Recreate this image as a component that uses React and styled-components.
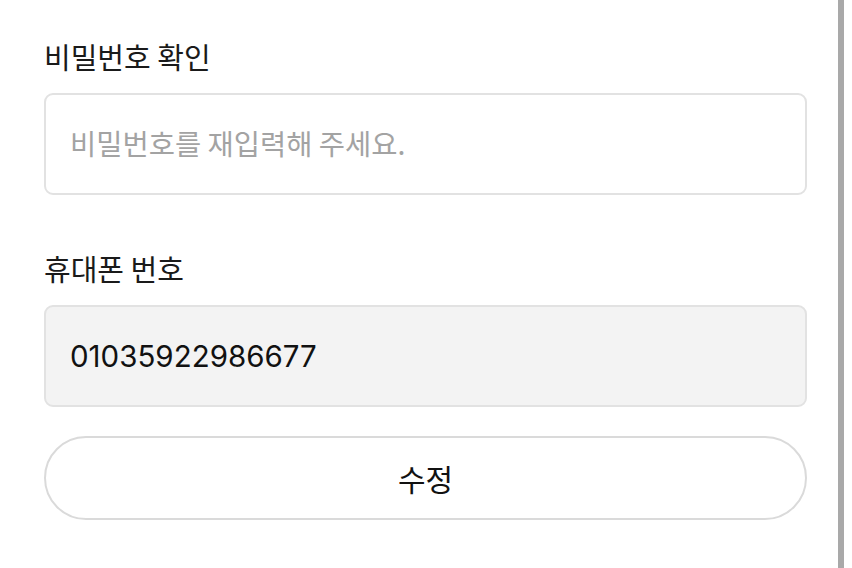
import React from "react";
import styled, { createGlobalStyle } from "styled-components";

const Global = createGlobalStyle`
  html, body { margin: 0; padding: 0; background: #ffffff; }
  body { font-family: "Inter", "Noto Sans CJK KR", sans-serif; }
  * { box-sizing: border-box; }
`;

const Screen = styled.div`
  display: flex;
  width: 852px;
  height: 568px;
  overflow: hidden;
  background: #ffffff;
`;

const Content = styled.div`
  flex: 1;
  display: flex;
  flex-direction: column;
  padding: 37px 31px 0 44px;
`;

const ScrollBar = styled.div`
  width: 6px;
  margin-right: 8px;
  background: #a9a9a9;
`;

const Field = styled.div`
  display: flex;
  flex-direction: column;
  gap: 18px;
  margin-bottom: ${(p) => p.$gap || 0}px;
`;

const Label = styled.label`
  font-family: "Noto Sans CJK KR", sans-serif;
  font-size: 29px;
  line-height: 38px;
  font-weight: 400;
  color: #1a1a1a;
`;

const Input = styled.input`
  width: 100%;
  height: 102px;
  padding: 0 24px;
  border: 2px solid #e2e2e2;
  border-radius: 9px;
  background: ${(p) => (p.readOnly ? "#f3f3f3" : "#ffffff")};
  font-family: "Inter", "Noto Sans CJK KR", sans-serif;
  font-size: 29.5px;
  color: #111111;
  outline: none;
  &::placeholder {
    font-family: "Noto Sans CJK KR", sans-serif;
    font-size: 28.5px;
    color: #a3a3a3;
  }
`;

const Button = styled.button`
  width: 100%;
  height: 84px;
  border: 2px solid #dadada;
  border-radius: 42px;
  background: #ffffff;
  font-family: "Noto Sans CJK KR", sans-serif;
  font-size: 30px;
  font-weight: 400;
  color: #111111;
  cursor: pointer;
`;

export default function App() {
  return (
    <>
      <Global />
      <Screen>
        <Content>
          <Field $gap={54}>
            <Label>비밀번호 확인</Label>
            <Input type="password" placeholder="비밀번호를 재입력해 주세요." />
          </Field>
          <Field $gap={29}>
            <Label>휴대폰 번호</Label>
            <Input readOnly value="01035922986677" />
          </Field>
          <Button>수정</Button>
        </Content>
        <ScrollBar />
      </Screen>
    </>
  );
}
